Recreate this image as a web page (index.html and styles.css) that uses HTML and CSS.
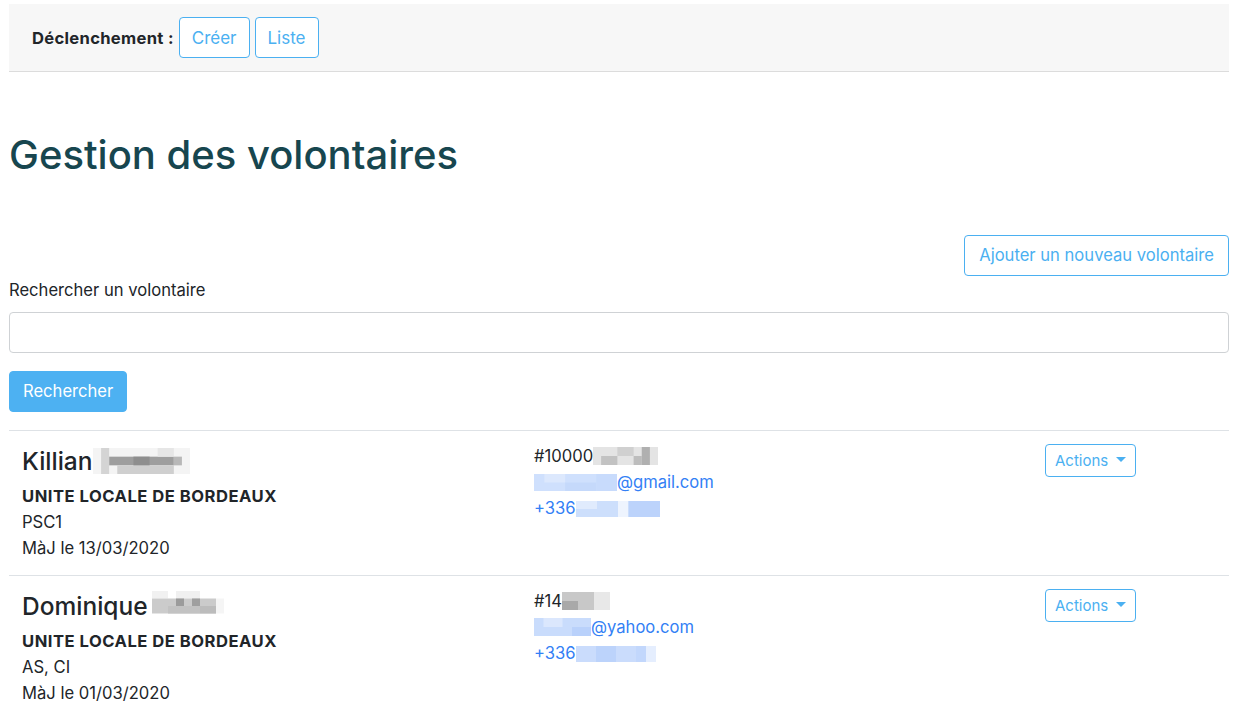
FILE: index.html
```html
<!DOCTYPE html>
<html lang="fr">
<head>
<meta charset="utf-8">
<title>Gestion des volontaires</title>
<link rel="stylesheet" href="styles.css">
</head>
<body>
<div class="page">
  <nav class="navbar">
    <span class="nav-label">Déclenchement :</span>
    <a class="btn btn-outline btn-nav" href="#">Créer</a>
    <a class="btn btn-outline btn-nav" href="#">Liste</a>
  </nav>

  <h1 class="title">Gestion des volontaires</h1>

  <div class="toolbar">
    <a class="btn btn-outline btn-add" href="#">Ajouter un nouveau volontaire</a>
  </div>

  <form class="search">
    <label class="search-label" for="q">Rechercher un volontaire</label>
    <input class="search-input" id="q" type="text">
    <button class="btn btn-primary" type="button">Rechercher</button>
  </form>

  <ul class="list">
    <li class="item">
      <div class="col-id">
        <div class="name">Killian<svg class="blur" width="97" height="26" viewBox="0 0 12 3" preserveAspectRatio="none"><rect x="0" y="0" width="12" height="3" fill="#f4f4f4"/><rect x="1" y="0" width="1" height="3" fill="#d4d4d4"/><rect x="2" y="1" width="8" height="1" fill="#9e9e9e"/><rect x="3" y="2" width="7" height="1" fill="#cfcfcf"/><rect x="5" y="1" width="2" height="1" fill="#8e8e8e"/><rect x="8" y="0" width="2" height="1" fill="#e6e6e6"/><rect x="10" y="1" width="1" height="1" fill="#b8b8b8"/></svg></div>
        <div class="unit">UNITE LOCALE DE BORDEAUX</div>
        <div>PSC1</div>
        <div>MàJ le 13/03/2020</div>
      </div>
      <div class="col-contact">
        <div>#10000<svg class="blur-sm" width="65" height="18" viewBox="0 0 8 2" preserveAspectRatio="none"><rect x="0" y="0" width="8" height="2" fill="#e4e4e4"/><rect x="1" y="1" width="2" height="1" fill="#c2c2c2"/><rect x="3" y="0" width="2" height="1" fill="#d0d0d0"/><rect x="5" y="1" width="1" height="1" fill="#bdbdbd"/><rect x="6" y="0" width="1" height="2" fill="#b0b0b0"/></svg></div>
        <div><a class="link" href="#"><svg class="blur-sm" width="83" height="17" viewBox="0 0 8 2" preserveAspectRatio="none"><rect x="0" y="0" width="8" height="2" fill="#cfe0fd"/><rect x="1" y="0" width="2" height="1" fill="#dce8fd"/><rect x="3" y="1" width="3" height="1" fill="#c5d9fb"/><rect x="6" y="0" width="2" height="2" fill="#c8dbfc"/></svg>@gmail.com</a></div>
        <div><a class="link" href="#">+336<svg class="blur-sm" width="84" height="16" viewBox="0 0 8 2" preserveAspectRatio="none"><rect x="0" y="0" width="8" height="2" fill="#cddffc"/><rect x="0" y="0" width="2" height="1" fill="#e0ebfd"/><rect x="4" y="0" width="1" height="2" fill="#eef4fe"/><rect x="5" y="0" width="3" height="2" fill="#bcd3fb"/></svg></a></div>
      </div>
      <div class="col-actions">
        <button class="btn btn-outline btn-sm" type="button">Actions<span class="caret"></span></button>
      </div>
    </li>
    <li class="item">
      <div class="col-id">
        <div class="name">Dominique<svg class="blur blur-gap" width="88" height="30" viewBox="0 0 11 4" preserveAspectRatio="none"><rect x="0" y="0" width="11" height="4" fill="#ffffff"/><rect x="0" y="0" width="2" height="1" fill="#f1f1f1"/><rect x="3" y="0" width="3" height="1" fill="#f0f0f0"/><rect x="0" y="1" width="8" height="2" fill="#cbcbcb"/><rect x="3" y="1" width="1" height="1" fill="#9b9b9b"/><rect x="5" y="1" width="1" height="1" fill="#9f9f9f"/><rect x="2" y="2" width="4" height="1" fill="#c2c2c2"/><rect x="6" y="2" width="2" height="1" fill="#bcbcbc"/><rect x="8" y="1" width="1" height="2" fill="#f5f5f5"/></svg></div>
        <div class="unit">UNITE LOCALE DE BORDEAUX</div>
        <div>AS, CI</div>
        <div>MàJ le 01/03/2020</div>
      </div>
      <div class="col-contact">
        <div>#14<svg class="blur-sm" width="48" height="18" viewBox="0 0 6 2" preserveAspectRatio="none"><rect x="0" y="0" width="6" height="2" fill="#c8c8c8"/><rect x="0" y="1" width="2" height="1" fill="#a9a9a9"/><rect x="4" y="0" width="2" height="2" fill="#e8e8e8"/></svg></div>
        <div><a class="link" href="#"><svg class="blur-sm" width="57" height="18" viewBox="0 0 6 2" preserveAspectRatio="none"><rect x="0" y="0" width="6" height="2" fill="#c9dcfc"/><rect x="1" y="0" width="2" height="1" fill="#dbe7fd"/><rect x="4" y="1" width="2" height="1" fill="#b9d1fb"/></svg>@yahoo.com</a></div>
        <div><a class="link" href="#">+336<svg class="blur-sm" width="80" height="16" viewBox="0 0 8 2" preserveAspectRatio="none"><rect x="0" y="0" width="8" height="2" fill="#cadcfc"/><rect x="2" y="0" width="2" height="2" fill="#bcd3fb"/><rect x="6" y="0" width="1" height="2" fill="#c2d7fc"/><rect x="7" y="0" width="1" height="2" fill="#e5eefe"/></svg></a></div>
      </div>
      <div class="col-actions">
        <button class="btn btn-outline btn-sm" type="button">Actions<span class="caret"></span></button>
      </div>
    </li>
  </ul>
</div>
</body>
</html>
```

FILE: styles.css
```css
* { box-sizing: border-box; }

html, body {
  margin: 0;
  background: #ffffff;
}

body {
  font-family: Inter, "Noto Sans", "Liberation Sans", sans-serif;
  font-size: 16.6px;
  line-height: 26px;
  color: #212529;
}

.page {
  padding: 4px 8px 0 9px;
}

.navbar {
  display: flex;
  align-items: center;
  gap: 5px;
  height: 68px;
  padding: 0 23px;
  background: #f7f7f7;
  border-bottom: 1px solid #dcdcdc;
}

.nav-label {
  font-weight: 700;
  letter-spacing: 0.3px;
  margin-right: 0;
}

.btn {
  display: inline-flex;
  align-items: center;
  justify-content: center;
  font-family: inherit;
  font-size: 16.6px;
  line-height: 24px;
  padding: 7px 14px;
  border: 1px solid #4bb0f1;
  border-radius: 4px;
  text-decoration: none;
  cursor: pointer;
  background: transparent;
}

.btn-outline {
  color: #4bb0f1;
  background: #ffffff;
}

.btn-nav {
  font-size: 17px;
  line-height: 27px;
  padding: 7px 12px 5px;
}

.btn-add {
  line-height: 25px;
  padding: 7px 14px;
}

.btn-primary {
  background: #4db1f2;
  border-color: #4db1f2;
  color: #ffffff;
  padding: 7px 13px;
  line-height: 25px;
}

.btn-sm {
  font-size: 15px;
  line-height: 21px;
  padding: 5px 9px;
}

.caret {
  display: inline-block;
  margin-left: 8px;
  border-top: 5px solid #4bb0f1;
  border-left: 5px solid transparent;
  border-right: 5px solid transparent;
  transform: translateY(-1px);
}

.title {
  margin: 58px 0 0;
  font-size: 40px;
  line-height: 50px;
  font-weight: 500;
  color: #17464f;
}

.toolbar {
  display: flex;
  justify-content: flex-end;
  margin-top: 55px;
}

.search {
  display: flex;
  flex-direction: column;
  align-items: flex-start;
  margin: 0;
}

.search-label {
  margin-top: 1px;
  margin-bottom: 9px;
}

.search-input {
  width: 100%;
  height: 41px;
  border: 1px solid #cfd2d5;
  border-radius: 4px;
  margin-bottom: 18px;
  font-family: inherit;
  font-size: 16px;
}

.list {
  list-style: none;
  margin: 18px 0 0;
  padding: 0;
}

.item {
  display: grid;
  grid-template-columns: 512px 511px 1fr;
  padding: 12px 13px 14px;
  border-top: 1px solid #dee2e6;
}

.name {
  display: flex;
  align-items: center;
  font-size: 24.5px;
  line-height: 32px;
  font-weight: 500;
  padding-top: 2px;
  margin-bottom: 6px;
}

.blur {
  display: block;
}

.blur-gap {
  margin-left: 4px;
}

.blur-sm {
  display: inline-block;
  vertical-align: -3px;
}

.unit {
  font-weight: 700;
  letter-spacing: 0.5px;
}

.link {
  color: #3380f5;
  text-decoration: none;
}

.col-actions {
  padding-top: 1px;
}
```
